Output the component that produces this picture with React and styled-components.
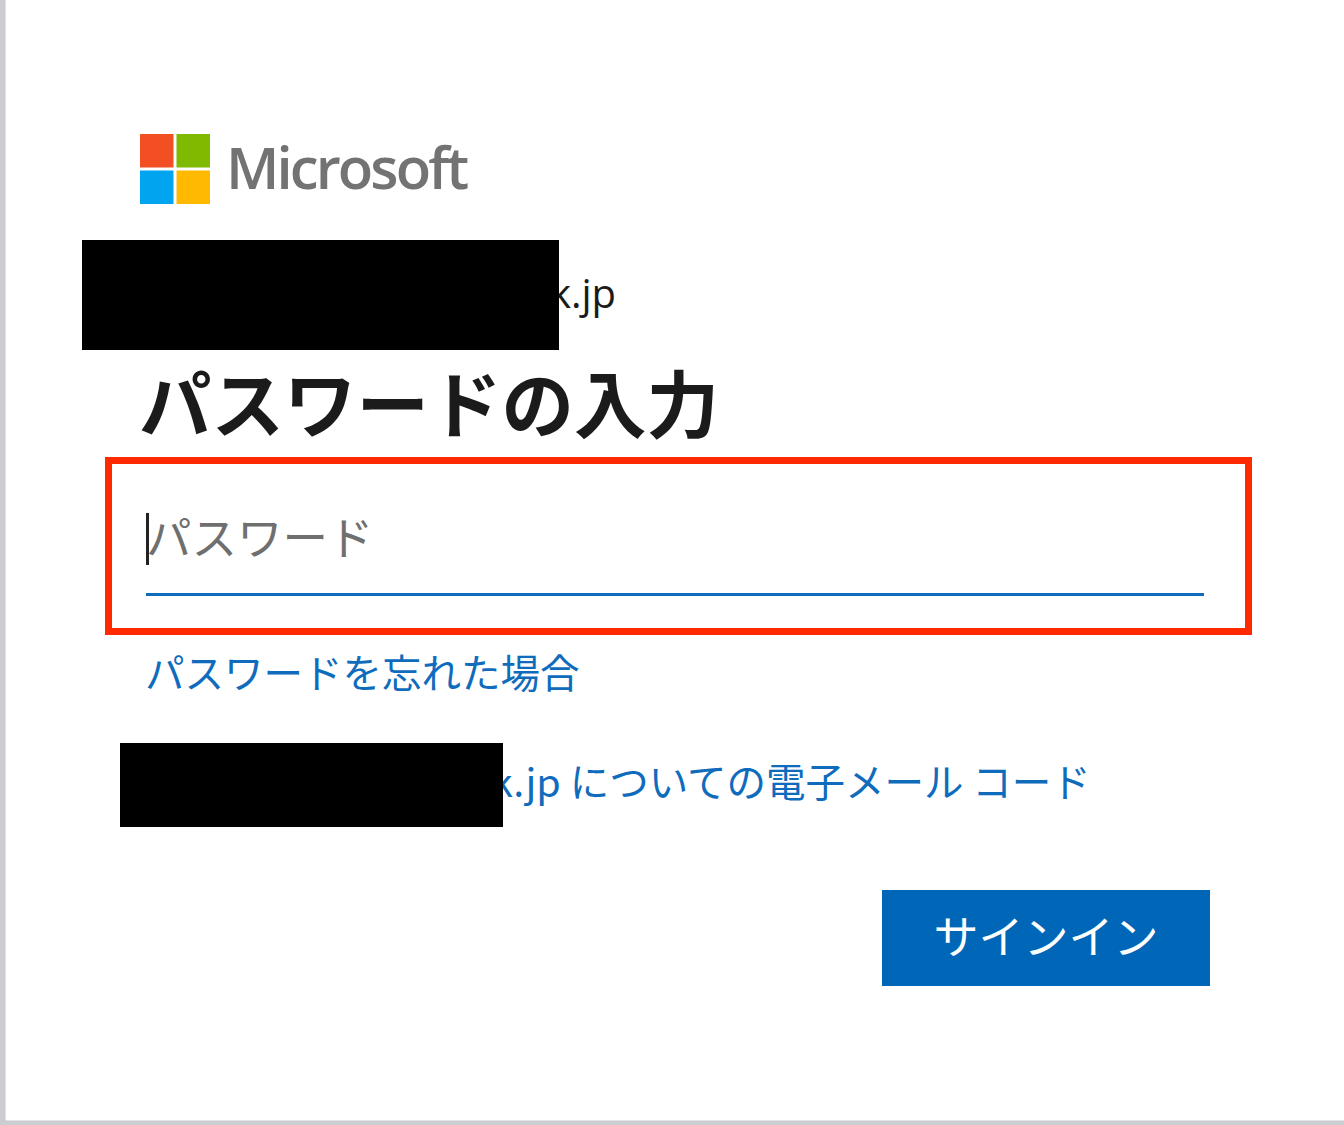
import React from 'react'
import styled, { createGlobalStyle } from 'styled-components'

const Global = createGlobalStyle`
html, body {
  margin: 0;
  padding: 0;
  background: #fff;
}
`

const Page = styled.div`
  width: 1344px;
  height: 1125px;
  box-sizing: border-box;
  padding: 0 0 5px 6px;
  background: #cbcdd0;
  overflow: hidden;
  font-family: "Noto Sans CJK JP", "Open Sans", sans-serif;
`

const Card = styled.main`
  height: 100%;
  box-sizing: border-box;
  background: #fff;
  box-shadow: -1px 0 0 #e4e4e8, 0 1px 0 #e4e4e8;
  padding: 134px 134px 0 99px;
  display: flex;
  flex-direction: column;
`

const Brand = styled.div`
  display: flex;
  align-items: center;
  gap: 16px;
  margin-left: 35px;
  height: 70px;
`

const Wordmark = styled.span`
  font-family: "Open Sans", "Noto Sans", sans-serif;
  font-size: 58px;
  font-weight: 600;
  letter-spacing: -2.9px;
  line-height: 70px;
  padding-bottom: 4px;
  color: #737373;
`

const Email = styled.div`
  position: relative;
  margin-top: 59px;
  height: 60px;
  padding-left: 445px;
  font-family: "Open Sans", "Noto Sans", sans-serif;
  font-size: 40px;
  line-height: 60px;
  color: #1b1b1b;
`

const Redaction = styled.span`
  position: absolute;
  z-index: 1;
  background: #000;
  left: ${p => p.$left}px;
  top: ${p => p.$top}px;
  width: ${p => p.$width}px;
  height: ${p => p.$height}px;
`

const Title = styled.h1`
  margin: 30px 0 0 34px;
  font-size: 72.5px;
  font-weight: 700;
  line-height: 96px;
  color: #1b1b1b;
  white-space: nowrap;
`

const FieldFrame = styled.div`
  margin: 8px -42px 0 0;
  box-sizing: border-box;
  height: 178px;
  border: 7px solid #ff2a00;
  padding: 40px 41px 0 34px;
`

const Placeholder = styled.div`
  position: relative;
  height: 92px;
  box-sizing: border-box;
  border-bottom: 3px solid #0f6cbd;
  font-size: 45.5px;
  line-height: 62px;
  color: #6f6f6f;
  white-space: nowrap;
`

const Caret = styled.span`
  position: absolute;
  left: 0;
  top: 9px;
  width: 3px;
  height: 52px;
  background: #222;
`

const Link = styled.a`
  display: block;
  font-size: 39.5px;
  line-height: 56px;
  color: #0f6cbd;
  text-decoration: none;
  white-space: nowrap;
`

const ForgotRow = styled.div`
  margin: 8px 0 0 40px;
`

const CodeRow = styled.div`
  position: relative;
  margin-top: 53px;
  padding-left: 386px;
`

const Actions = styled.div`
  display: flex;
  justify-content: flex-end;
  margin-top: 82px;
`

const SignIn = styled.button`
  width: 328px;
  height: 96px;
  border: none;
  border-radius: 0;
  padding: 0 0 8px;
  background: #0067b8;
  color: #fff;
  font-family: inherit;
  font-size: 45px;
  line-height: 1;
`

const Logo = () => (
  <svg width="70" height="70" viewBox="0 0 70 70" aria-hidden="true">
    <rect x="0" y="0" width="33.5" height="33.5" fill="#f25022" />
    <rect x="36.5" y="0" width="33.5" height="33.5" fill="#7fba00" />
    <rect x="0" y="36.5" width="33.5" height="33.5" fill="#00a4ef" />
    <rect x="36.5" y="36.5" width="33.5" height="33.5" fill="#ffb900" />
  </svg>
)

export default function App() {
  return (
    <Page>
      <Global />
      <Card>
        <Brand>
          <Logo />
          <Wordmark>Microsoft</Wordmark>
        </Brand>
        <Email>
          <Redaction $left={-23} $top={-23} $width={477} $height={110} />
          k.jp
        </Email>
        <Title>パスワードの入力</Title>
        <FieldFrame>
          <Placeholder>
            <Caret />
            パスワード
          </Placeholder>
        </FieldFrame>
        <ForgotRow>
          <Link href="#">パスワードを忘れた場合</Link>
        </ForgotRow>
        <CodeRow>
          <Redaction $left={15} $top={-9} $width={383} $height={84} />
          <Link href="#">k.jp についての電子メール コード</Link>
        </CodeRow>
        <Actions>
          <SignIn>サインイン</SignIn>
        </Actions>
      </Card>
    </Page>
  )
}
